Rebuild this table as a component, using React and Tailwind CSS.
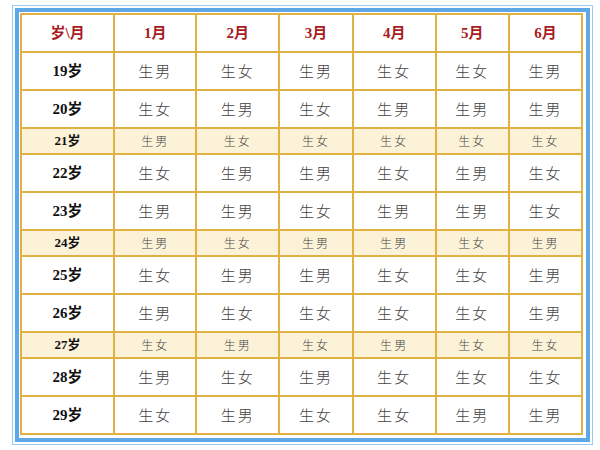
const months = ["1月", "2月", "3月", "4月", "5月", "6月"];

const rows = [
  ["19岁", "男女男女女男", false],
  ["20岁", "女男女男男男", false],
  ["21岁", "男女女女女女", true],
  ["22岁", "女男男女男女", false],
  ["23岁", "男男女男男女", false],
  ["24岁", "男女男男女男", true],
  ["25岁", "女男男女女男", false],
  ["26岁", "男女女女女男", false],
  ["27岁", "女男女男女女", true],
  ["28岁", "男女男女女女", false],
  ["29岁", "女男女女男男", false],
];

const serif = { fontFamily: '"Liberation Serif", "Noto Sans CJK SC", serif' };

export default function App() {
  return (
    <div className="w-[600px] h-[450px] bg-white pt-[5px] pl-[12px]">
      <div className="w-[581px] h-[440px] border border-[#9ccbf2] p-[2px]">
        <div className="w-full h-full border-[4px] border-[#5ea8e8] p-px">
          <table
            className="w-[563px] table-fixed border-collapse border-2 border-[#e0b243]"
            style={{ fontFamily: '"Noto Sans CJK SC", sans-serif' }}
          >
            <colgroup>
              <col className="w-[93px]" />
              <col className="w-[82px]" />
              <col className="w-[83px]" />
              <col className="w-[73px]" />
              <col className="w-[83px]" />
              <col className="w-[73px]" />
              <col className="w-[73px]" />
            </colgroup>
            <thead>
              <tr className="h-[38px]">
                <th
                  className="border-2 border-[#e0b243] text-[15px] font-bold text-[#a81c1f]"
                  style={serif}
                >
                  岁\月
                </th>
                {months.map((m) => (
                  <th
                    key={m}
                    className="border-2 border-[#e0b243] text-[15px] font-bold text-[#a81c1f]"
                    style={serif}
                  >
                    {m}
                  </th>
                ))}
              </tr>
            </thead>
            <tbody>
              {rows.map(([age, data, hl]) => (
                <tr
                  key={age}
                  className={hl ? "h-[26px] bg-[#fcf2d8]" : "h-[38px] bg-white"}
                >
                  <td
                    className={
                      "border-2 border-[#e0b243] text-center font-bold text-[#111] " +
                      (hl ? "text-[13px]" : "text-[15px]")
                    }
                    style={serif}
                  >
                    {age}
                  </td>
                  {data.split("").map((s, i) => (
                    <td
                      key={i}
                      className={
                        "border-2 border-[#e0b243] text-center font-light text-[#444] tracking-[2px] " +
                        (hl ? "text-[12px]" : "text-[15px]")
                      }
                    >
                      生{s}
                    </td>
                  ))}
                </tr>
              ))}
            </tbody>
          </table>
        </div>
      </div>
    </div>
  );
}
